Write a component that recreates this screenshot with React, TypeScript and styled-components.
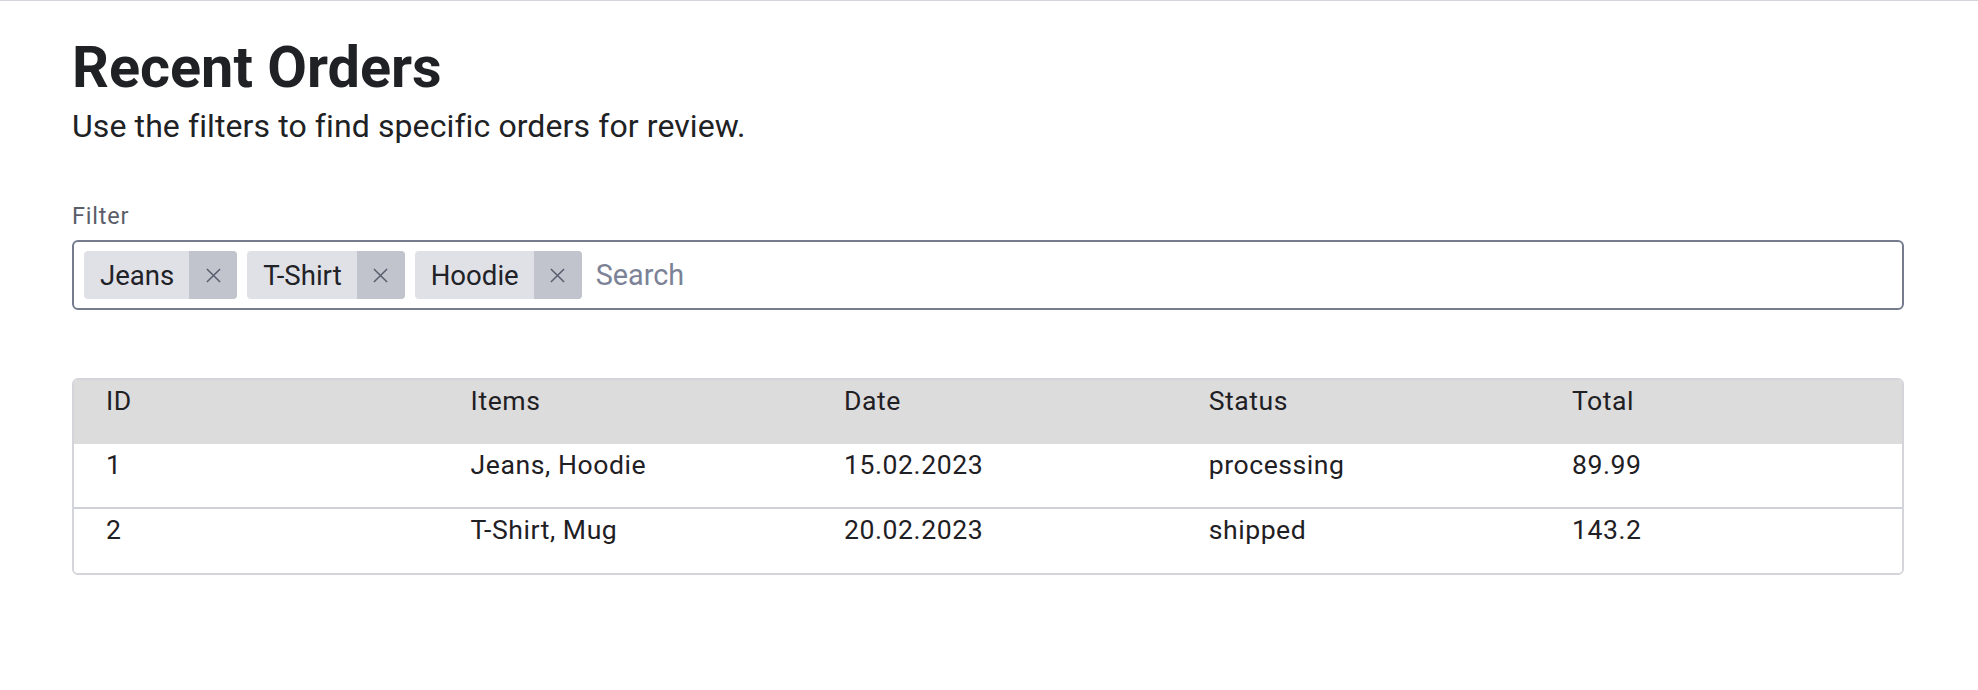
import React from 'react';
import styled, { createGlobalStyle } from 'styled-components';

const GlobalStyle = createGlobalStyle`
  html, body {
    margin: 0;
    padding: 0;
    background: #ffffff;
  }

  body {
    border-top: 1px solid #d3d6dd;
    color: #202124;
    font-family: Roboto, "Liberation Sans", Arial, sans-serif;
  }
`;

const SPage = styled.main`
  padding: 34px 74px 40px 72px;
`;

const STitle = styled.h1`
  color: #202124;
  font-size: 57.6px;
  font-weight: 700;
  line-height: 66px;
  margin: 0;
`;

const SSubtitle = styled.p`
  color: #202124;
  font-size: 32px;
  letter-spacing: 0.1px;
  line-height: 38px;
  margin: 6px 0 0;
`;

const SField = styled.div`
  display: flex;
  flex-direction: column;
  gap: 7px;
  margin-top: 54px;
`;

const SLabel = styled.label`
  color: #5b5e69;
  font-size: 23.5px;
  letter-spacing: 0.8px;
  line-height: 34px;
`;

const SInputBox = styled.div`
  align-items: center;
  border: 2px solid #767c8d;
  border-radius: 6px;
  display: flex;
  gap: 10px;
  padding: 9px 10px;
`;

const STag = styled.span`
  align-items: stretch;
  background: #e0e1e6;
  border-radius: 4px;
  display: inline-flex;
  height: 48px;
  overflow: hidden;
`;

const STagText = styled.span`
  align-items: center;
  color: #212226;
  display: flex;
  font-size: 27.6px;
  padding: 0 15px 0 16px;
`;

const SRemove = styled.button`
  align-items: center;
  background: #c1c4cc;
  border: none;
  color: #585d6e;
  cursor: pointer;
  display: flex;
  justify-content: center;
  padding: 0;
  width: 48px;
`;

const SSearch = styled.input`
  border: none;
  color: #202124;
  flex: 1;
  font-family: inherit;
  font-size: 28.8px;
  outline: none;
  padding: 0 0 0 4px;

  &::placeholder {
    color: #7c8296;
  }
`;

const STable = styled.div`
  border: 2px solid #d3d5da;
  border-radius: 6px;
  margin-top: 68px;
  overflow: hidden;
`;

const SRow = styled.div<{ $head?: boolean }>`
  background: ${(p) => (p.$head ? '#dcdcdc' : '#ffffff')};
  display: grid;
  grid-template-columns: 364.6fr 373.4fr 364.6fr 363.3fr 362fr;

  & + & + & {
    border-top: 2px solid #cfd1d6;
  }
`;

const SCell = styled.div`
  box-sizing: border-box;
  color: #1f2024;
  font-size: 26.6px;
  height: 63.5px;
  letter-spacing: 0.55px;
  line-height: 38px;
  padding: 2px 32px 0;
`;

const CloseIcon = () => (
  <svg width="15" height="15" viewBox="0 0 16 16" fill="none">
    <path d="M1 1L15 15M15 1L1 15" stroke="currentColor" strokeWidth="1.6" />
  </svg>
);

const filters = ['Jeans', 'T-Shirt', 'Hoodie'];

const columns = ['ID', 'Items', 'Date', 'Status', 'Total'];

const orders = [
  ['1', 'Jeans, Hoodie', '15.02.2023', 'processing', '89.99'],
  ['2', 'T-Shirt, Mug', '20.02.2023', 'shipped', '143.2'],
];

const App: React.FC = () => (
  <>
    <GlobalStyle />
    <SPage>
      <STitle>Recent Orders</STitle>
      <SSubtitle>Use the filters to find specific orders for review.</SSubtitle>

      <SField>
        <SLabel htmlFor="filter-search">Filter</SLabel>
        <SInputBox>
          {filters.map((f) => (
            <STag key={f}>
              <STagText>{f}</STagText>
              <SRemove type="button" aria-label={`Remove ${f}`}>
                <CloseIcon />
              </SRemove>
            </STag>
          ))}
          <SSearch id="filter-search" placeholder="Search" />
        </SInputBox>
      </SField>

      <STable>
        <SRow $head>
          {columns.map((c) => (
            <SCell key={c}>{c}</SCell>
          ))}
        </SRow>
        {orders.map((row) => (
          <SRow key={row[0]}>
            {row.map((v, i) => (
              <SCell key={i}>{v}</SCell>
            ))}
          </SRow>
        ))}
      </STable>
    </SPage>
  </>
);

export default App;
